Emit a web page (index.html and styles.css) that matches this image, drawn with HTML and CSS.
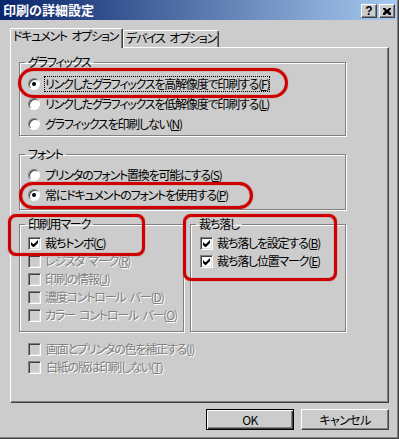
FILE: index.html
```html
<!DOCTYPE html>
<html>
<head>
  <meta charset="utf-8">
  <link rel="stylesheet" href="styles.css">
</head>
<body>
  <div class="window">
    <div class="frame">
      <div class="titlebar">
        <span class="title">印刷の詳細設定</span>
        <div class="tbtns">
          <span class="tbtn">?</span>
          <span class="tbtn">
            <svg width="8" height="7" viewBox="0 0 8 7"><path d="M0 0h2l2 2 2-2h2v1l-2 2 2 2v2h-2l-2-2-2 2h-2v-2l2-2-2-2z" fill="#000"/></svg>
          </span>
        </div>
      </div>

      <div class="content">
        <div class="tabs">
          <div class="tab active">ドキュメント オプション</div>
          <div class="tab second">デバイス オプション</div>
        </div>

        <div class="panel">
          <fieldset class="grp graphics">
            <legend>グラフィックス</legend>
            <div class="row"><span class="rb on"></span><span class="lbl focus">リンクしたグラフィックスを高解像度で印刷する(<u>F</u>)</span></div>
            <div class="row"><span class="rb"></span><span class="lbl">リンクしたグラフィックスを低解像度で印刷する(<u>L</u>)</span></div>
            <div class="row"><span class="rb"></span><span class="lbl">グラフィックスを印刷しない(<u>N</u>)</span></div>
          </fieldset>

          <fieldset class="grp fonts">
            <legend>フォント</legend>
            <div class="row"><span class="rb"></span><span class="lbl">プリンタのフォント置換を可能にする(<u>S</u>)</span></div>
            <div class="row"><span class="rb on"></span><span class="lbl">常にドキュメントのフォントを使用する(<u>P</u>)</span></div>
          </fieldset>

          <div class="pair">
            <fieldset class="grp marksgrp">
              <legend>印刷用マーク</legend>
              <div class="crow"><span class="cb on"><svg width="7" height="7" viewBox="0 0 7 7"><path d="M0 2v3l2 2h1l4-4v-3l-4 4h-1z" fill="#000"/></svg></span><span class="lbl">裁ちトンボ(<u>C</u>)</span></div>
              <div class="crow off"><span class="cb"></span><span class="lbl">レジスタ マーク(<u>R</u>)</span></div>
              <div class="crow off"><span class="cb"></span><span class="lbl">印刷の情報(<u>J</u>)</span></div>
              <div class="crow off"><span class="cb"></span><span class="lbl">濃度コントロール バー(<u>D</u>)</span></div>
              <div class="crow off"><span class="cb"></span><span class="lbl">カラー コントロール バー(<u>O</u>)</span></div>
            </fieldset>

            <fieldset class="grp bleed">
              <legend>裁ち落し</legend>
              <div class="crow"><span class="cb on"><svg width="7" height="7" viewBox="0 0 7 7"><path d="M0 2v3l2 2h1l4-4v-3l-4 4h-1z" fill="#000"/></svg></span><span class="lbl">裁ち落しを設定する(<u>B</u>)</span></div>
              <div class="crow"><span class="cb on"><svg width="7" height="7" viewBox="0 0 7 7"><path d="M0 2v3l2 2h1l4-4v-3l-4 4h-1z" fill="#000"/></svg></span><span class="lbl">裁ち落し位置マーク(<u>E</u>)</span></div>
            </fieldset>
          </div>

          <div class="extra">
            <div class="crow off"><span class="cb"></span><span class="lbl">画面とプリンタの色を補正する(<u>I</u>)</span></div>
            <div class="crow off"><span class="cb"></span><span class="lbl">白紙の版は印刷しない(<u>T</u>)</span></div>
          </div>
        </div>

        <div class="buttons">
          <button class="btn default">OK</button>
          <button class="btn">キャンセル</button>
        </div>
      </div>
    </div>

    <!-- red annotation marks drawn over the dialog -->
    <div class="mark pill m1"></div>
    <div class="mark pill m2"></div>
    <div class="mark box m3"></div>
    <div class="mark box m4"></div>
  </div>
</body>
</html>
```

FILE: styles.css
```css
body {
  margin: 0;
  font-family: "Noto Sans CJK JP", sans-serif;
  font-size: 12px;
  font-feature-settings: "palt";
  letter-spacing: -1.2px;
  word-spacing: 3px;
  color: #000;
}

.window {
  position: relative;
  width: 399px;
  height: 439px;
  box-sizing: border-box;
  background: #cccccc;
  border-right: 1px solid #404040;
  border-bottom: 1px solid #404040;
  overflow: hidden;
}
.frame {
  height: 100%;
  box-sizing: border-box;
  border-right: 1px solid #808080;
  border-bottom: 1px solid #808080;
}

.titlebar {
  height: 20px;
  display: flex;
  justify-content: space-between;
  background: linear-gradient(to right, #0a246a, #a6caf0);
}
.title {
  color: #fff;
  font-weight: bold;
  font-size: 13px;
  line-height: 19px;
  padding-left: 3px;
  letter-spacing: 0;
  font-feature-settings: normal;
}
.tbtns {
  display: flex;
  gap: 2px;
  padding: 4px 2px 0 0;
}
.tbtn {
  width: 16px;
  height: 14px;
  box-sizing: border-box;
  background: #cccccc;
  border: 1px solid;
  border-color: #fff #404040 #404040 #fff;
  box-shadow: inset -1px -1px 0 #808080;
  display: flex;
  align-items: center;
  justify-content: center;
  font: bold 12px "Liberation Sans", sans-serif;
  letter-spacing: 0;
}

.content {
  padding: 8px 8px 0 10px;
}

.tabs {
  display: flex;
  align-items: flex-end;
  height: 19px;
  position: relative;
  z-index: 1;
}
.tab {
  box-sizing: border-box;
  height: 17px;
  background: #cccccc;
  border-top: 1px solid #fff;
  border-left: 1px solid #fff;
  border-right: 1px solid #404040;
  box-shadow: inset -1px 0 0 #808080;
  border-radius: 2px 2px 0 0;
  line-height: 14px;
  text-align: center;
  white-space: nowrap;
}
.tab.active {
  width: 113px;
  height: 20px;
  margin-bottom: -1px;
  padding-right: 2px;
}
.tab.second {
  width: 96px;
}

.panel {
  height: 356px;
  box-sizing: border-box;
  border-top: 1px solid #fff;
  border-left: 1px solid #fff;
  border-right: 1px solid #404040;
  border-bottom: 1px solid #404040;
  box-shadow: inset -1px -1px 0 #808080;
  padding: 7px 0 0 8px;
}

.grp {
  margin: 0;
  padding: 0;
  min-width: 0;
  box-sizing: border-box;
  border: 1px solid #808080;
  box-shadow: 1px 1px 0 #fff, inset 1px 1px 0 #fff;
}
.grp legend {
  margin-left: 5px;
  padding: 0 3px;
  line-height: 14px;
}
.graphics {
  width: 327px;
  padding: 5px 0 1px;
}
.fonts {
  width: 327px;
  margin-top: 11px;
  padding: 4px 0 4px;
}

.row {
  height: 20px;
  display: flex;
  align-items: center;
  padding-left: 8px;
  white-space: nowrap;
}
.rb {
  position: relative;
  width: 12px;
  height: 12px;
  box-sizing: border-box;
  border-radius: 50%;
  background: #fff;
  border: 1px solid;
  border-color: #808080 #fff #fff #808080;
  box-shadow: inset 1px 1px 0 #404040;
  margin-right: 5px;
  flex: none;
}
.rb.on::after {
  content: "";
  position: absolute;
  left: 3px;
  top: 3px;
  width: 4px;
  height: 4px;
  border-radius: 50%;
  background: #000;
}
.lbl {
  line-height: 14px;
}
.lbl.focus {
  outline: 1px dotted #000;
  outline-offset: 0;
}

.pair {
  display: flex;
  gap: 6px;
  margin-top: 7px;
}
.marksgrp {
  width: 165px;
  height: 115px;
  padding: 3px 0 0;
}
.bleed {
  width: 156px;
  height: 115px;
  padding: 3px 0 0;
}

.crow {
  height: 18px;
  display: flex;
  align-items: center;
  padding-left: 8px;
  white-space: nowrap;
}
.bleed .crow {
  padding-left: 9px;
}
.cb {
  width: 13px;
  height: 13px;
  box-sizing: border-box;
  background: #fff;
  border: 1px solid;
  border-color: #808080 #fff #fff #808080;
  box-shadow: inset 1px 1px 0 #404040, inset -1px -1px 0 #dcdcdc;
  margin-right: 4px;
  display: flex;
  align-items: center;
  justify-content: center;
  flex: none;
}
.crow.off .cb {
  background: #cccccc;
}
.crow.off .lbl {
  color: #808080;
  text-shadow: 1px 1px 0 #fff;
}

.extra {
  margin-top: 8px;
  padding-left: 1px;
}
.extra .lbl {
  margin-left: 1px;
}

.buttons {
  display: flex;
  justify-content: flex-end;
  gap: 7px;
  padding-top: 6px;
}
.btn {
  width: 88px;
  height: 21px;
  box-sizing: border-box;
  background: #cccccc;
  border: 1px solid;
  border-color: #fff #404040 #404040 #fff;
  box-shadow: inset -1px -1px 0 #808080;
  font-family: "Noto Sans CJK JP", sans-serif;
  font-size: 12px;
  font-feature-settings: "palt";
  letter-spacing: -0.6px;
  padding: 0;
  color: #000;
}
.btn.default {
  border: 1px solid #000;
  box-shadow: inset 1px 1px 0 #fff, inset -1px -1px 0 #404040, inset -2px -2px 0 #808080;
}

.mark {
  position: absolute;
  box-sizing: border-box;
  border: 3px solid #cc0000;
  box-shadow: 0 0 1px #cc0000, inset 0 0 1px #cc0000;
}
.pill {
  border-radius: 15px;
}
.box {
  border-radius: 8px;
}
.m1 { left: 18px; top: 68px; width: 270px; height: 30px; }
.m2 { left: 19px; top: 182px; width: 234px; height: 27px; }
.m3 { left: 8px; top: 214px; width: 137px; height: 42px; }
.m4 { left: 183px; top: 214px; width: 154px; height: 67px; }
```
